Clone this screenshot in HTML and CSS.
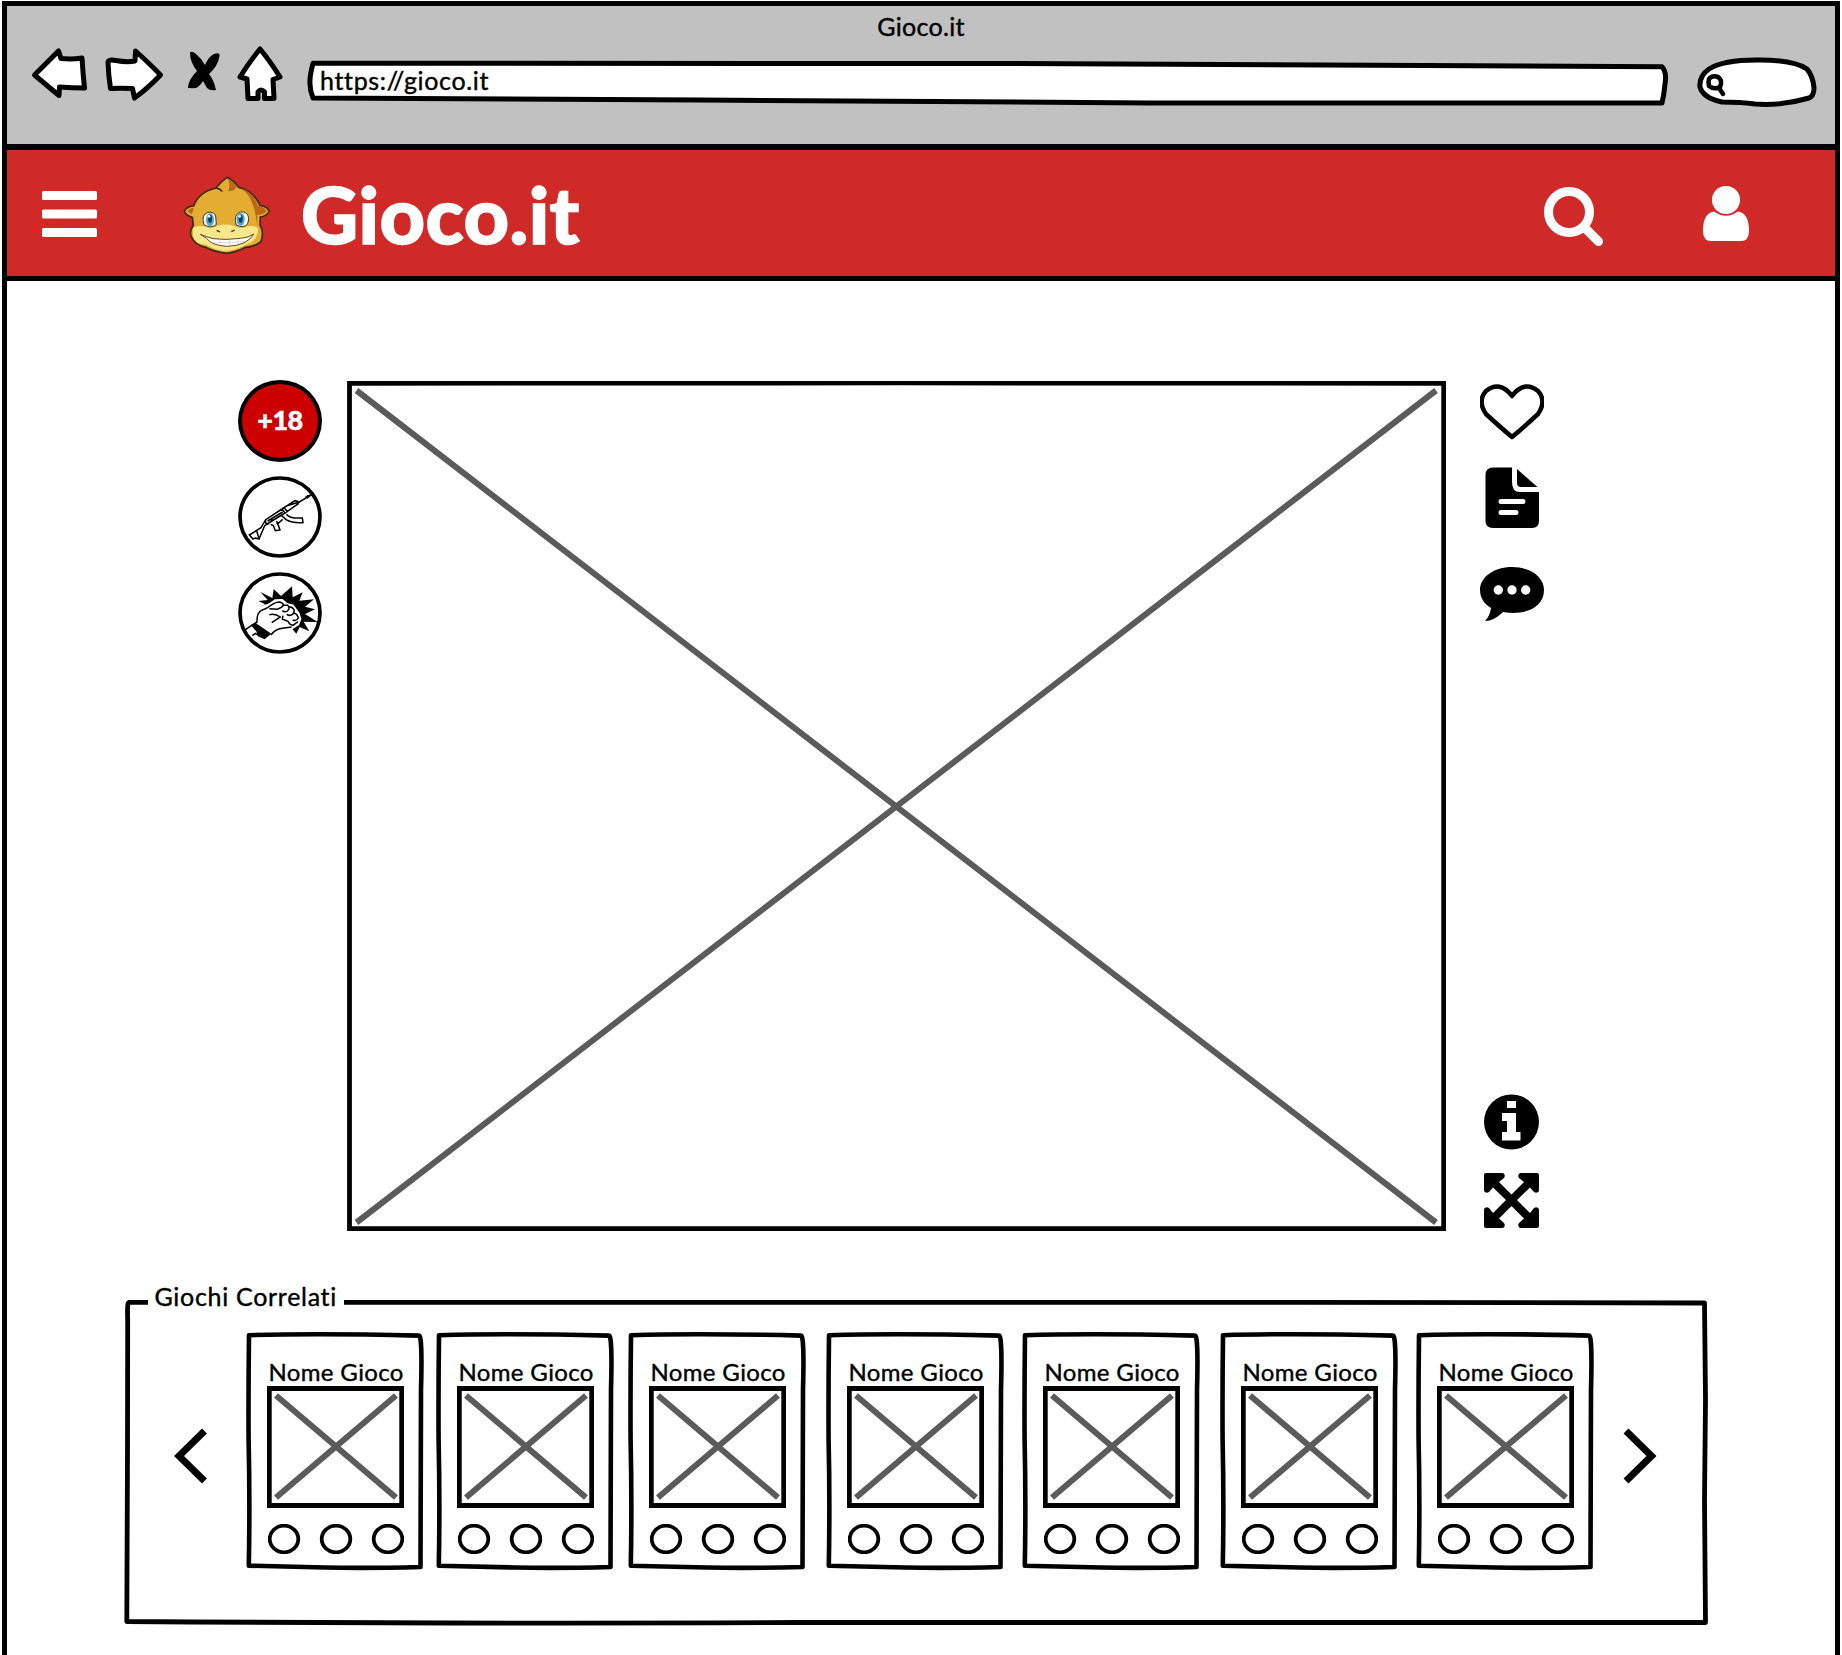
FILE: index.html
```html
<!DOCTYPE html>
<html lang="it">
<head>
<meta charset="utf-8">
<title>Gioco.it</title>
<link rel="stylesheet" href="styles.css">
</head>
<body>
<svg class="defs" aria-hidden="true">
  <symbol id="card-frame" viewBox="0 0 180 242"><path d="M4 5.2Q70 3 174 5.6Q177.500 5.500 176 60Q175.500 170 175.500 237Q120 238.500 80 237.500L3.800 235.700Q5 170 3.600 110Q3.300 60 4 5.200Z"/></symbol>
  <symbol id="thumb" viewBox="0 0 137 122"><path class="cross" d="M9 9.500L129 111.500M129 9.500L9 111.500"/><path class="box" d="M2.300 2.500H134.700V119.500H2.300Z"/></symbol>
  <symbol id="dots" viewBox="0 0 136 30"><ellipse cx="16" cy="15" rx="14.300" ry="13.300"/><ellipse cx="68" cy="15" rx="14.300" ry="13.300"/><ellipse cx="120" cy="15" rx="14.300" ry="13.300"/></symbol>
</svg>
<div class="window">
  <div class="chrome">
    <div class="chrome-title">Gioco.it</div>
    <div class="toolbar">
      <svg class="nav" width="60" height="64" viewBox="30 46 60 64"><path d="M34.500 75L58.500 51L61 58.500Q72 59.500 82 58Q83 74 84.500 88Q72 88 59.500 87L59 95.500Z"/></svg>
      <svg class="nav" width="80" height="64" viewBox="90 46 80 64"><path d="M108 62Q109 59 116 60.500Q127 62.500 135 61L135.500 51Q150 64 160.500 75Q147 89 134.500 98L132.500 88.500Q120 88 110.500 88.500Q108.500 76 108 62Z"/></svg>
      <svg width="60" height="64" viewBox="170 46 60 64"><path d="M190 53Q191 50 196 54Q201 58 205 65Q209 56 214 54Q220 52 219.500 56Q218 66 209 74Q214 80 216 90Q210 91 207 88L203 81Q198 90 190 88L188 88Q188 80 197 71Q190 62 190 53Z"/></svg>
      <svg class="nav" width="70" height="64" viewBox="230 46 70 64"><path d="M260 49Q270 61 280 77L273 79.500L274 98.500H264.500V92Q261 88 258 92V98.500H248L247 79L240 77Q250 61 260 49Z"/></svg>
      <div class="address">
        <svg class="nav outline" width="1380" height="64" viewBox="300 46 1380 64"><path d="M313 63.300L1000 63.500L1662 66.800Q1667 72 1665 84Q1664 95 1662 103H1150L700 100L313 98Q308 86 311 72Z"/></svg>
        <span>https://gioco.it</span>
      </div>
      <svg class="nav search-pill" width="140" height="64" viewBox="1690 46 140 64"><path d="M1722 102Q1703 98 1700 87Q1699 76 1709 69Q1724 59.500 1760 60Q1794 60 1807 69Q1813 76 1814 88Q1814 96 1809 98Q1782 106 1755 104Q1740 102 1722 102Z"/><path d="M1709 79Q1712 75 1718 77Q1723 80 1720 87Q1714 90 1709 86Q1708 82 1709 79ZM1719 88L1723 94"/></svg>
    </div>
  </div>
  <header class="site-header">
    <svg class="menu" width="56" height="48" viewBox="0 0 56 48"><rect x="1" y="1" width="55" height="9" rx="1.500"/><rect x="1" y="19.500" width="55" height="9" rx="1.500"/><rect x="1" y="38" width="55" height="9" rx="1.500"/></svg>
    <svg class="mascot" width="90" height="82" viewBox="36 28 270 246">
      <path d="M138 70Q154 50 171 38Q191 47 206 68Q253 80 270 123Q289 123 298 139Q290 155 271 157L270 181Q283 204 273 230Q256 246 226 248Q202 262 170 266Q132 261 110 249Q75 243 63 214Q58 196 70 182L67 158Q48 153 43 139Q53 124 71 124Q86 82 138 70Z" fill="#e2ad31" stroke="#3d2914" stroke-width="5"/>
      <path d="M174 80Q183 63 173 44Q190 51 201 67L189 78ZM210 70Q253 83 264 125Q281 125 290 139Q280 151 262 151L262 184Q252 91 210 70ZM52 139Q58 130 72 130L65 149Z" fill="#bd6815"/>
      <path d="M69 189Q82 181 104 185Q128 194 142 183Q164 176 190 183Q212 194 233 185Q254 181 265 192Q261 228 234 237Q206 253 170 259Q137 257 108 240Q77 240 69 216Z" fill="#f5e78a"/>
      <path d="M102 180Q92 151 114 143Q133 141 137 154L139 180Q120 193 102 180ZM199 181Q189 151 211 142Q231 139 236 158Q237 183 219 186Q209 187 199 181Z" fill="#f5f6f4" stroke="#473724" stroke-width="3"/>
      <ellipse cx="120" cy="165" rx="12" ry="19" fill="#4ba8cc"/><ellipse cx="212" cy="164" rx="12" ry="19" fill="#4ba8cc"/>
      <ellipse cx="120" cy="162" rx="6" ry="12" fill="#163b58"/><ellipse cx="212" cy="162" rx="6" ry="12" fill="#163b58"/>
      <circle cx="117" cy="155" r="4" fill="#fff"/><circle cx="209" cy="155" r="4" fill="#fff"/>
      <path d="M91 209Q111 217 129 222Q167 227 212 221Q236 219 252 208Q231 243 171 245Q123 242 110 221Z" fill="#fff" stroke="#694621" stroke-width="3"/>
      <path d="M122 232Q170 238 224 230M150 225V241M178 225V243M204 224V237" fill="none" stroke="#c6c6be" stroke-width="2"/>
      <path d="M140 197L150 202M184 201L194 196M138 70Q151 72 157 81" fill="none" stroke="#3d2914" stroke-width="4"/>
    </svg>
    <div class="wordmark">Gioco.it</div>
    <svg class="find" width="62" height="62" viewBox="0 0 62 62"><circle cx="26" cy="26" r="20.500"/><path d="M42 42L55.500 55.500"/></svg>
    <svg class="user" width="48" height="56" viewBox="0 0 48 56"><circle cx="24" cy="14" r="14"/><path d="M12 25.500Q24 34 36 25.500Q47 27 47 45Q47 55 39 55H9Q1 55 1 45Q1 27 12 25.500Z"/></svg>
  </header>
  <main>
    <section class="stage">
      <div class="badges">
        <div class="age">+18</div>
        <svg class="badge" width="84" height="82" viewBox="39 318 252 246">
          <ellipse cx="165" cy="441" rx="120" ry="117"/>
          <g class="fine"><path d="M73 495L108 473L122 449L171 417L210 392L218 394L220 401L183 427L170 435L131 459L119 467L102 507L91 504L84 507ZM122 449L122 459L131 463M171 417L181 430M177 413L188 425M184 408L220 397M218 399L260 373M241 383L250 376M245 385L260 373M170 437L183 449Q202 460 234 458L232 444L211 444Q194 444 184 433M137 463L145 467L151 482L165 480L160 466L155 458M154 454L160 460L173 448M137 450H145M95 482L102 507M128 453L173 426"/></g>
        </svg>
        <svg class="badge" width="84" height="82" viewBox="39 606 252 246">
          <path class="solid" d="M101 710L121 703L100 693L128 690L106 666L142 684L146 657L168 678L201 649L203 682L233 667L223 692L267 688L240 710L270 718L240 732L278 756L236 755L253 784L224 771L214 791L199 773L158 692Z"/>
          <path class="fist" d="M80 766L98 748L102 728L126 709L151 692L171 691L187 704L203 707L220 731L225 747L219 762L202 773L184 774L161 785L138 795Z"/>
          <g class="fine"><path d="M61 779L96 756Q95 730 108 722L126 714Q150 696 162 696Q172 697 176 705Q170 714 157 718L133 716M133 734Q151 730 166 741L140 758M176 705L188 706Q197 715 187 723Q180 728 172 722M190 710Q202 709 207 719Q209 731 199 735Q190 738 185 733M206 729Q217 731 220 744Q214 755 203 750M174 737L172 747L189 754L194 762L204 766L219 755M138 795Q150 778 172 775L200 771M82 797L91 790L98 795"/></g>
          <path class="solid" d="M77 765L91 758L139 791L119 808L98 799L94 784Z"/>
          <ellipse cx="165" cy="729" rx="120" ry="117"/>
        </svg>
      </div>
      <svg class="game" width="1099" height="850" viewBox="347 381 1099 850"><path class="cross" d="M356.500 390.500L1436 1222.500M1436 390.500L356.500 1222.500"/><path class="box" d="M349.500 383.300L900 382.900L1443.700 383.300V1228.600H349.500Z"/></svg>
      <div class="actions">
        <svg width="64" height="62" viewBox="1480 381 64 62"><path class="heart" d="M1512 437Q1500 427 1486 414Q1477 401 1486 391Q1500 380 1512 396Q1524 380 1538 391Q1547 401 1538 414Q1524 427 1512 437Z"/></svg>
        <svg class="file" width="64" height="75" viewBox="1480 460 64 75"><path d="M1493 467.500H1512V482Q1512 492 1520 492H1539V521Q1539 528 1532 528H1493Q1485.500 528 1485.500 521V475Q1485.500 467.500 1493 467.500ZM1517 469L1537.500 487H1521Q1517 487 1517 483Z"/><path class="lines" d="M1501 501.500H1523M1501 512.500H1516"/></svg>
        <svg class="comment" width="64" height="65" viewBox="1480 560 64 65"><path d="M1512 567C1530 567 1544 577 1544 590C1544 608 1524 616 1503 612Q1494 621 1485 621Q1490 616 1491 608C1484 604 1480 597 1480 590C1480 577 1494 567 1512 567Z"/><g fill="#fff"><circle cx="1498.300" cy="590" r="4.700"/><circle cx="1512" cy="590" r="4.700"/><circle cx="1525.700" cy="590" r="4.700"/></g></svg>
        <svg class="info" width="64" height="60" viewBox="1480 1090 64 60"><circle cx="1511.500" cy="1122" r="27.500"/><path fill="#fff" d="M1507 1101H1516V1108H1507ZM1502 1113H1516V1132H1520.500V1140.500H1502V1132H1507V1121H1502Z"/></svg>
        <svg class="expand" width="64" height="63" viewBox="1480 1168 64 63"><path d="M1486 1173H1503Q1506 1175 1504 1178L1499 1182L1511.500 1194.500L1524 1182L1519 1178Q1517 1175 1520 1173H1537Q1539 1173 1539 1175V1191Q1537 1194 1534 1192L1530 1187.500L1517 1200L1530 1213L1534 1208Q1537 1206 1539 1209V1226Q1539 1228 1537 1228H1520Q1517 1226 1519 1223L1524 1218.500L1511.500 1206L1499 1218.500L1504 1223Q1506 1226 1503 1228H1486Q1484 1228 1484 1226V1209Q1486 1206 1489 1208L1493 1213L1506 1200L1493 1187.500L1489 1192Q1486 1194 1484 1191V1175Q1484 1173 1486 1173Z"/></svg>
      </div>
    </section>
    <section class="related">
      <svg class="related-frame" width="1590" height="350" viewBox="120 1280 1590 350"><path d="M148 1302.300H129Q127 1302 127.700 1320L127.500 1450L126.800 1621.500Q500 1624 800 1622.500H1705.500L1704.500 1500L1705.500 1400L1704.500 1303L1300 1302.300H344"/></svg>
      <h2>Giochi Correlati</h2>
      <div class="carousel">
        <svg class="arrow" width="75" height="62" viewBox="170 1425 75 62"><path d="M204.500 1431L179 1456L204.500 1481"/></svg>
        <article class="card"><svg class="frame"><use href="#card-frame"/></svg><h3>Nome Gioco</h3><svg class="thumb"><use href="#thumb"/></svg><svg class="dots"><use href="#dots"/></svg></article>
        <article class="card"><svg class="frame"><use href="#card-frame"/></svg><h3>Nome Gioco</h3><svg class="thumb"><use href="#thumb"/></svg><svg class="dots"><use href="#dots"/></svg></article>
        <article class="card"><svg class="frame"><use href="#card-frame"/></svg><h3>Nome Gioco</h3><svg class="thumb"><use href="#thumb"/></svg><svg class="dots"><use href="#dots"/></svg></article>
        <article class="card"><svg class="frame"><use href="#card-frame"/></svg><h3>Nome Gioco</h3><svg class="thumb"><use href="#thumb"/></svg><svg class="dots"><use href="#dots"/></svg></article>
        <article class="card"><svg class="frame"><use href="#card-frame"/></svg><h3>Nome Gioco</h3><svg class="thumb"><use href="#thumb"/></svg><svg class="dots"><use href="#dots"/></svg></article>
        <article class="card"><svg class="frame"><use href="#card-frame"/></svg><h3>Nome Gioco</h3><svg class="thumb"><use href="#thumb"/></svg><svg class="dots"><use href="#dots"/></svg></article>
        <article class="card"><svg class="frame"><use href="#card-frame"/></svg><h3>Nome Gioco</h3><svg class="thumb"><use href="#thumb"/></svg><svg class="dots"><use href="#dots"/></svg></article>
        <svg class="arrow" width="75" height="62" viewBox="1595.500 1425 75 62"><path d="M1626.500 1431L1652 1456L1626.500 1481"/></svg>
      </div>
    </section>
  </main>
</div>
</body>
</html>
```
FILE: styles.css
```css
* { box-sizing: border-box; }
body { margin: 0; background: #fff; color: #000; font-family: Lato, sans-serif; overflow: hidden; }
svg { display: block; flex: none; }
h2, h3 { margin: 0; font-weight: 400; }
.defs { position: absolute; width: 0; height: 0; }

.window { height: 1654px; margin: 1px 2px 0; border: 5px solid #000; border-bottom: 0; }

.chrome { height: 144px; background: #c1c1c1; border-bottom: 6px solid #000; font-size: 25px; -webkit-text-stroke: .4px #000; }
.chrome-title { height: 40px; line-height: 40px; text-align: center; letter-spacing: .3px; }
.toolbar { display: flex; padding-left: 23px; }
.nav path { fill: #fff; stroke: #000; stroke-width: 5; stroke-linejoin: round; stroke-linecap: round; }
.address { display: grid; width: 1380px; margin-right: 10px; }
.address > * { grid-area: 1 / 1; }
.address span { padding-left: 20px; line-height: 68px; letter-spacing: .65px; }
.search-pill path + path { stroke-width: 4.5; }

.site-header { display: flex; align-items: flex-start; height: 131px; background: #cf2a28; border-bottom: 5px solid #000; color: #fff; fill: #fff; }
.menu { margin: 40px 0 0 34px; }
.mascot { margin: 24px 0 0 85px; }
.wordmark { width: 300px; margin: 25px 0 0 29px; font-size: 79px; line-height: 78px; font-weight: 900; letter-spacing: .4px; -webkit-text-stroke: 1.5px #fff; }
.find { margin: 36px 0 0 942px; fill: none; stroke: #fff; stroke-width: 9; stroke-linecap: round; }
.user { margin: 36px 0 0 97px; }

.stage { display: flex; height: 850px; margin: 100px 0 0 231px; }
.badges { display: flex; flex-direction: column; gap: 14px; width: 84px; margin: -1px 25px 0 0; }
.age { height: 82px; border: 4px solid #000; border-radius: 50%; background: #c00; color: #fff; font-size: 27px; font-weight: 900; line-height: 71px; text-align: center; letter-spacing: -.5px; -webkit-text-stroke: .5px #fff; }
.badge ellipse { fill: none; stroke: #000; stroke-width: 11; }
.fine path { fill: none; stroke: #000; stroke-width: 4.5; }
.fist { fill: #fff; stroke: #fff; stroke-width: 8; }
.cross { fill: none; stroke: #5b5b5c; stroke-width: 6; }
.box { fill: none; stroke: #000; stroke-width: 4.8; }
.actions { display: flex; flex-direction: column; margin-left: 34px; }
.heart { fill: none; stroke: #000; stroke-width: 4.5; stroke-linejoin: round; }
.file { margin-top: 17px; }
.lines { stroke: #fff; stroke-width: 5; stroke-linecap: round; }
.comment { margin-top: 25px; }
.info { margin-top: auto; }
.expand { margin-top: 18px; }

.related { position: relative; width: 1590px; margin: 49px 0 0 113px; }
.related-frame { position: absolute; inset: 0; fill: none; stroke: #000; stroke-width: 4.8; stroke-linejoin: round; }
.related h2 { height: 50px; padding-left: 34.5px; font-size: 25px; line-height: 32px; letter-spacing: .7px; -webkit-text-stroke: .4px #000; }
.carousel { display: flex; align-items: flex-start; padding-left: 50px; }
.arrow { margin-top: 95px; fill: none; stroke: #000; stroke-width: 7; }
.card { position: relative; flex: none; width: 180px; height: 242px; }
.card:nth-of-type(2) { margin-left: 10px; }
.card:nth-of-type(3) { margin-left: 12px; }
.card:nth-of-type(4), .card:nth-of-type(6) { margin-left: 18px; }
.card:nth-of-type(5), .card:nth-of-type(7) { margin-left: 16px; }
.frame { position: absolute; inset: 0; width: 180px; height: 242px; fill: none; stroke: #000; stroke-width: 4.6; stroke-linejoin: round; }
.card h3 { height: 56px; padding-left: 23.5px; font-size: 24px; line-height: 83px; letter-spacing: .35px; white-space: nowrap; -webkit-text-stroke: .4px #000; }
.thumb { width: 137px; height: 122px; margin-left: 21.5px; }
.dots { width: 136px; height: 30px; margin: 16px 0 0 23px; fill: none; stroke: #000; stroke-width: 3.8; }
```
